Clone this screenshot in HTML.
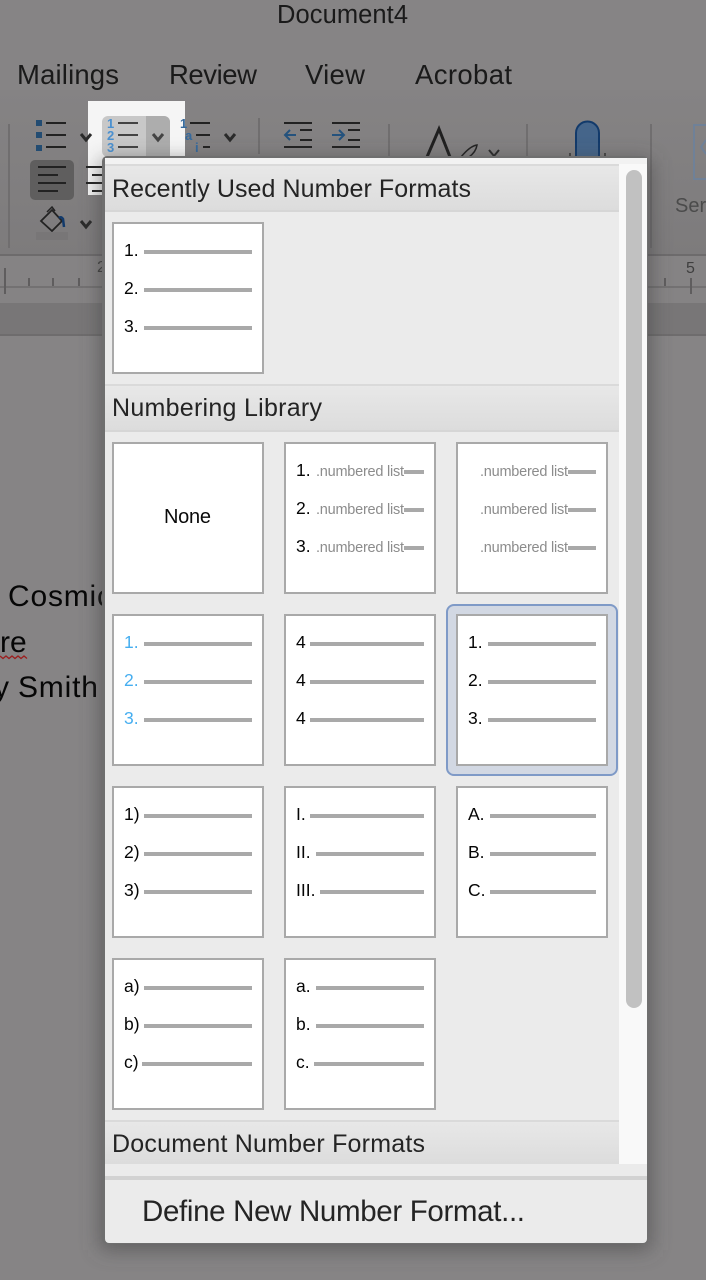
<!DOCTYPE html>
<html lang="en"><head><meta charset="utf-8"><title>Document4</title>
<style>
html,body{margin:0;padding:0;background:#858384;width:706px;height:1280px;overflow:hidden}
svg{display:block}
text{font-family:"Liberation Sans",sans-serif}
.h{font-size:25px;fill:#242424}
.t{font-size:27.5px;fill:#1a1a1a}
.n{font-size:17.5px;fill:#050505}
.b{font-size:17.5px;fill:#46aef0}
.g{font-size:14.5px;fill:#8c8c8c}
.c{fill:#fff;stroke:#a9a9a9;stroke-width:2}
.l{fill:#a9a9a9}
.k{stroke:#222;stroke-width:2;fill:none}
.v{stroke:#2a2a2a;stroke-width:3;fill:none}
</style></head><body>
<svg width="706" height="1280" viewBox="0 0 706 1280" xmlns="http://www.w3.org/2000/svg">
<defs>
<linearGradient id="hd" x1="0" y1="0" x2="0" y2="1"><stop offset="0" stop-color="#e8e8e8"/><stop offset="1" stop-color="#dcdcdc"/></linearGradient>
<linearGradient id="tb" x1="0" y1="0" x2="0" y2="1"><stop offset="0" stop-color="#858384"/><stop offset="1" stop-color="#7d7b7c"/></linearGradient>
<filter id="sh" x="-10%" y="-5%" width="120%" height="110%"><feGaussianBlur stdDeviation="10"/></filter>
</defs>
<rect width="706" height="1280" fill="#868485"/>
<rect y="90" width="706" height="164" fill="url(#tb)"/>
<text x="277" y="23" class="t" style="font-size:25.5px" textLength="131">Document4</text>
<text x="17" y="84" class="t" textLength="102">Mailings</text>
<text x="169" y="84" class="t" textLength="88">Review</text>
<text x="305" y="84" class="t" textLength="60">View</text>
<text x="415" y="84" class="t" textLength="97">Acrobat</text>

<!-- toolbar -->
<path d="M88 101H185V157H105V195H88Z" fill="#f5f5f5"/>
<rect x="8" y="124" width="2" height="124" fill="#706e6f"/>
<rect x="258" y="118" width="2" height="36" fill="#706e6f"/>
<rect x="388" y="124" width="2" height="40" fill="#706e6f"/>
<rect x="526" y="124" width="2" height="40" fill="#706e6f"/>
<rect x="650" y="124" width="2" height="124" fill="#706e6f"/>
<rect x="36" y="120" width="6" height="6" fill="#234c72"/><rect x="36" y="132" width="6" height="6" fill="#234c72"/><rect x="36" y="145" width="6" height="6" fill="#234c72"/>
<path class="k" d="M46 123H66M46 135H66M46 147H66"/>
<path class="v" d="M81 134l5 6 5-6"/>

<rect x="102" y="116" width="68" height="41" rx="6" fill="#c8c8c8"/>
<path d="M146 116H164a6 6 0 0 1 6 6V157H146Z" fill="#adadad"/>
<text x="107" y="128" style="font-size:13px;font-weight:bold" fill="#4a90d0">1</text>
<text x="107" y="140" style="font-size:13px;font-weight:bold" fill="#4a90d0">2</text>
<text x="107" y="152" style="font-size:13px;font-weight:bold" fill="#4a90d0">3</text>
<path class="k" stroke-opacity=".8" d="M118 123H138M118 135H138M118 147H138"/>
<path class="v" style="stroke:#444" d="M153 134l5 6 5-6"/>

<text x="180" y="128" style="font-size:13px;font-weight:bold" fill="#35699c">1</text>
<text x="185" y="140" style="font-size:13px;font-weight:bold" fill="#35699c">a</text>
<text x="195" y="152" style="font-size:13px;font-weight:bold" fill="#35699c">i</text>
<path class="k" d="M190 123H210M196 135H210M203 147H210"/>
<path class="v" d="M225 134l5 6 5-6"/>

<path class="k" d="M284 123H312M300 130H312M300 140H312M284 147H312"/>
<path d="M296 135H285M290 130l-5 5 5 5" stroke="#24527d" stroke-width="2" fill="none"/>
<path class="k" d="M332 123H360M348 130H360M348 140H360M332 147H360"/>
<path d="M332 135H343M339 130l5 5-5 5" stroke="#24527d" stroke-width="2" fill="none"/>

<path d="M427 157L439 129L450 157" stroke="#1f1f1f" stroke-width="3" fill="none"/>
<path d="M461 157Q470 146 477 145Q476 152 469 157" stroke="#222" stroke-width="1.5" fill="none"/>
<path class="v" style="stroke-width:2" d="M489 150l5 6 5-6"/>

<path d="M576 160V133a11.500 11.500 0 0 1 23 0V160Z" fill="#45658a" stroke="#123a6b" stroke-width="2"/>
<path d="M570 153V158M605 153V158" stroke="#333" stroke-width="1.500"/>
<rect x="694" y="125" width="14" height="54" fill="none" stroke="#6f8198" stroke-width="2"/>
<path d="M706 140l-5 7 5 7" stroke="#6f8198" stroke-width="2" fill="none"/>
<text x="675" y="212" style="font-size:20px" fill="#4b4b4b">Ser</text>

<rect x="30" y="160" width="44" height="40" rx="5" fill="#5f5e5e"/>
<path class="k" d="M38 167H66M38 175H58M38 183H66M38 191H58"/>
<path class="k" d="M86 167H104M92 175H104M86 183H104M92 191H104"/>
<path d="M41 221L52 210L62 221L52 231Z" fill="none" stroke="#222" stroke-width="1.800"/>
<path d="M47 212L52 207L55 211" fill="none" stroke="#222" stroke-width="1.500"/>
<path d="M59 218Q61 216 63 219L64 227" fill="none" stroke="#123a6b" stroke-width="2.500"/>
<rect x="36" y="232" width="32" height="8" fill="#787677"/>
<path class="v" d="M81 221l5 6 5-6"/>

<!-- ruler -->
<rect y="254" width="706" height="2" fill="#6d6b6c"/>
<rect y="256" width="706" height="47" fill="#858384"/>
<rect y="286" width="706" height="2" fill="#737172"/>
<rect y="303" width="706" height="32" fill="#787677"/>
<rect y="334" width="706" height="2" fill="#6e6c6d"/>
<path d="M5 268V294M29 278V286M53 278V286M79 278V286M665 278V286M691 278V294" stroke="#5f5d5e" stroke-width="2"/>
<text x="97" y="272" style="font-size:16px" fill="#3f3f3f">2</text>
<text x="686" y="273" style="font-size:16px" fill="#3f3f3f">5</text>

<!-- document -->
<text x="8" y="606" style="font-size:30px;letter-spacing:.8px" fill="#060606">Cosmic</text>
<text x="0" y="652" style="font-size:30px" fill="#060606">re</text>
<path d="M0 656l3 2.500 3-2.500 3 2.500 3-2.500 3 2.500 3-2.500 3 2.500 3-2.500 3 2.500" stroke="#9c1d1d" stroke-width="1.300" fill="none"/>
<text x="-6" y="697" style="font-size:30px" fill="#060606">y</text>
<text x="18" y="697" style="font-size:30px;letter-spacing:.8px" fill="#060606">Smith</text>

<!-- panel -->
<rect x="100" y="160" width="551" height="1090" fill="#3f3f3f" opacity=".55" filter="url(#sh)"/>
<rect x="102" y="156" width="546" height="1088" rx="5" fill="#6f6f6f"/>
<rect x="105" y="158" width="542" height="1085" rx="4" fill="#ebebeb"/>
<rect x="105" y="158" width="542" height="6" fill="#f2f2f2"/>
<rect x="619" y="164" width="28" height="1000" fill="#f9f9f9"/>
<rect x="626" y="170" width="16" height="838" rx="8" fill="#c1c1c1"/>

<rect x="105" y="164" width="514" height="47" fill="url(#hd)"/>
<rect x="105" y="164" width="514" height="2" fill="#dadada"/><rect x="105" y="210" width="514" height="2" fill="#d6d6d6"/>
<text x="112" y="197" class="h" textLength="359">Recently Used Number Formats</text>

<rect x="105" y="385" width="514" height="46" fill="url(#hd)"/>
<rect x="105" y="384" width="514" height="2" fill="#dadada"/><rect x="105" y="430" width="514" height="2" fill="#d6d6d6"/>
<text x="112" y="416" class="h" textLength="210">Numbering Library</text>

<rect x="105" y="1121" width="514" height="43" fill="url(#hd)"/>
<rect x="105" y="1120" width="514" height="2" fill="#dadada"/>
<text x="112" y="1152" class="h" textLength="313">Document Number Formats</text>

<rect x="105" y="1176" width="542" height="4" fill="#d2d2d2"/>
<text x="142" y="1221" class="h" style="font-size:29.5px" textLength="383">Define New Number Format...</text>

<!-- selection -->
<rect x="447" y="605" width="170" height="170" rx="7" fill="#d2d8e3" stroke="#7f9ac7" stroke-width="2"/>

<!-- recent -->
<rect class="c" x="113" y="223" width="150" height="150"/>
<text class="n" x="124" y="256">1.</text><text class="n" x="124" y="294">2.</text><text class="n" x="124" y="332">3.</text>
<rect class="l" x="144" y="250" width="108" height="4"/><rect class="l" x="144" y="288" width="108" height="4"/><rect class="l" x="144" y="326" width="108" height="4"/>

<!-- row 1 -->
<rect class="c" x="113" y="443" width="150" height="150"/>
<text x="164" y="523" style="font-size:20px" fill="#0a0a0a" textLength="47">None</text>

<rect class="c" x="285" y="443" width="150" height="150"/>
<text class="n" x="296" y="476">1.</text><text class="n" x="296" y="514">2.</text><text class="n" x="296" y="552">3.</text>
<text class="g" x="316" y="476" textLength="88">.numbered list</text><text class="g" x="316" y="514" textLength="88">.numbered list</text><text class="g" x="316" y="552" textLength="88">.numbered list</text>
<rect class="l" x="404" y="470" width="20" height="4"/><rect class="l" x="404" y="508" width="20" height="4"/><rect class="l" x="404" y="546" width="20" height="4"/>

<rect class="c" x="457" y="443" width="150" height="150"/>
<text class="g" x="480" y="476" textLength="88">.numbered list</text><text class="g" x="480" y="514" textLength="88">.numbered list</text><text class="g" x="480" y="552" textLength="88">.numbered list</text>
<rect class="l" x="568" y="470" width="28" height="4"/><rect class="l" x="568" y="508" width="28" height="4"/><rect class="l" x="568" y="546" width="28" height="4"/>

<!-- row 2 -->
<rect class="c" x="113" y="615" width="150" height="150"/>
<text class="b" x="124" y="648">1.</text><text class="b" x="124" y="686">2.</text><text class="b" x="124" y="724">3.</text>
<rect class="l" x="144" y="642" width="108" height="4"/><rect class="l" x="144" y="680" width="108" height="4"/><rect class="l" x="144" y="718" width="108" height="4"/>

<rect class="c" x="285" y="615" width="150" height="150"/>
<text class="n" x="296" y="648">4</text><text class="n" x="296" y="686">4</text><text class="n" x="296" y="724">4</text>
<rect class="l" x="310" y="642" width="114" height="4"/><rect class="l" x="310" y="680" width="114" height="4"/><rect class="l" x="310" y="718" width="114" height="4"/>

<rect class="c" x="457" y="615" width="150" height="150"/>
<text class="n" x="468" y="648">1.</text><text class="n" x="468" y="686">2.</text><text class="n" x="468" y="724">3.</text>
<rect class="l" x="488" y="642" width="108" height="4"/><rect class="l" x="488" y="680" width="108" height="4"/><rect class="l" x="488" y="718" width="108" height="4"/>

<!-- row 3 -->
<rect class="c" x="113" y="787" width="150" height="150"/>
<text class="n" x="124" y="820">1)</text><text class="n" x="124" y="858">2)</text><text class="n" x="124" y="896">3)</text>
<rect class="l" x="144" y="814" width="108" height="4"/><rect class="l" x="144" y="852" width="108" height="4"/><rect class="l" x="144" y="890" width="108" height="4"/>

<rect class="c" x="285" y="787" width="150" height="150"/>
<text class="n" x="296" y="820">I.</text><text class="n" x="296" y="858">II.</text><text class="n" x="296" y="896">III.</text>
<rect class="l" x="310" y="814" width="114" height="4"/><rect class="l" x="316" y="852" width="108" height="4"/><rect class="l" x="320" y="890" width="104" height="4"/>

<rect class="c" x="457" y="787" width="150" height="150"/>
<text class="n" x="468" y="820">A.</text><text class="n" x="468" y="858">B.</text><text class="n" x="468" y="896">C.</text>
<rect class="l" x="490" y="814" width="106" height="4"/><rect class="l" x="490" y="852" width="106" height="4"/><rect class="l" x="490" y="890" width="106" height="4"/>

<!-- row 4 -->
<rect class="c" x="113" y="959" width="150" height="150"/>
<text class="n" x="124" y="992">a)</text><text class="n" x="124" y="1030">b)</text><text class="n" x="124" y="1068">c)</text>
<rect class="l" x="144" y="986" width="108" height="4"/><rect class="l" x="144" y="1024" width="108" height="4"/><rect class="l" x="142" y="1062" width="110" height="4"/>

<rect class="c" x="285" y="959" width="150" height="150"/>
<text class="n" x="296" y="992">a.</text><text class="n" x="296" y="1030">b.</text><text class="n" x="296" y="1068">c.</text>
<rect class="l" x="316" y="986" width="108" height="4"/><rect class="l" x="316" y="1024" width="108" height="4"/><rect class="l" x="314" y="1062" width="110" height="4"/>
</svg>
</body></html>
